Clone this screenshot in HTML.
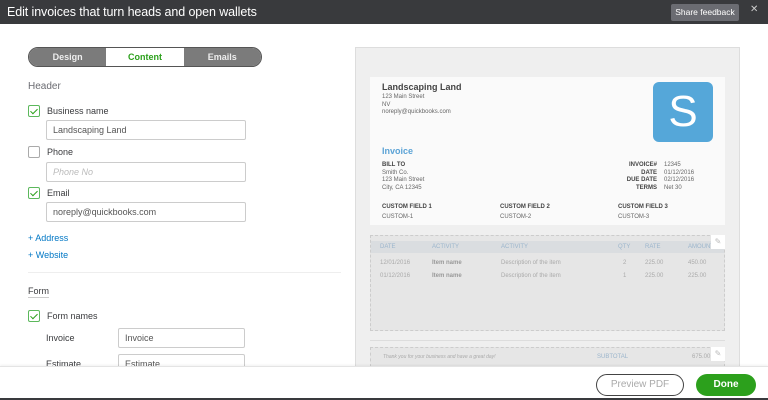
<!DOCTYPE html>
<html><head><style>
*{margin:0;padding:0;box-sizing:border-box}
body{width:768px;height:400px;overflow:hidden;background:#fff;font-family:"Liberation Sans",sans-serif;position:relative;color:#393a3d}
.a{position:absolute}
.top{left:0;top:0;width:768px;height:24px;background:#393a3d;color:#fff;font-size:12.5px;letter-spacing:-0.1px;line-height:24px;padding-left:7px}
.sf{left:671px;top:4px;width:68px;height:17px;background:#6b6c72;border-radius:2px;color:#fff;font-size:8.5px;line-height:17px;text-align:center}
.x{left:750px;top:4px;color:#ccc;font-size:10px}
.tabs{left:28px;top:47px;width:234px;height:20px;border:1px solid #555;border-radius:10px;overflow:hidden;display:flex;font-size:9px;font-weight:bold;line-height:18px;text-align:center}
.tabs div{flex:1;background:#7b7b7b;color:#eee}
.tabs .on{background:#fff;color:#2ca01c}
.lbl{font-size:9px;color:#393a3d}
.cb{width:12px;height:12px;border:1px solid #aaa;border-radius:2px;background:#fff}
.cb.c{border-color:#5cb85c}
.cb.c:after{content:"";position:absolute;left:3px;top:1px;width:3px;height:6px;border:solid #2ca01c;border-width:0 1px 1px 0;transform:rotate(45deg)}
.in{height:20px;border:1px solid #ccc;border-radius:2px;font-size:9px;line-height:18px;padding-left:6px;color:#555}
.link{color:#0077c5;font-size:9px}
.pv{left:355px;top:47px;width:385px;height:330px;background:#efefef;border:1px solid #ddd}
.s{font-size:6px;color:#666}
.b{font-weight:bold;color:#444}
</style></head><body>
<div class="a top">Edit invoices that turn heads and open wallets</div>
<div class="a sf">Share feedback</div>
<div class="a x">✕</div>

<div class="a tabs"><div>Design</div><div class="on">Content</div><div>Emails</div></div>
<div class="a" style="left:28px;top:81px;font-size:10px;color:#6b6c72">Header</div>
<div class="a cb c" style="left:28px;top:105px"></div>
<div class="a lbl" style="left:47px;top:106px">Business name</div>
<div class="a in" style="left:46px;top:120px;width:200px">Landscaping Land</div>
<div class="a cb" style="left:28px;top:146px"></div>
<div class="a lbl" style="left:47px;top:147px">Phone</div>
<div class="a in" style="left:46px;top:162px;width:200px;color:#bbb;font-style:italic">Phone No</div>
<div class="a cb c" style="left:28px;top:187px"></div>
<div class="a lbl" style="left:47px;top:188px">Email</div>
<div class="a in" style="left:46px;top:202px;width:200px">noreply@quickbooks.com</div>
<div class="a link" style="left:28px;top:233px">+ Address</div>
<div class="a link" style="left:28px;top:250px">+ Website</div>
<div class="a" style="left:28px;top:272px;width:313px;height:1px;background:#eee"></div>
<div class="a lbl" style="left:28px;top:286px;border-bottom:1px solid #ccc;padding-bottom:1px">Form</div>
<div class="a cb c" style="left:28px;top:310px"></div>
<div class="a lbl" style="left:47px;top:311px">Form names</div>
<div class="a lbl" style="left:46px;top:333px">Invoice</div>
<div class="a in" style="left:118px;top:328px;width:127px">Invoice</div>
<div class="a lbl" style="left:46px;top:359px">Estimate</div>
<div class="a in" style="left:118px;top:354px;width:127px">Estimate</div>

<div class="a pv"></div>
<div class="a" style="left:370px;top:77px;width:355px;height:148px;background:#fafafa"></div>
<div class="a b" style="left:382px;top:82px;font-size:9px">Landscaping Land</div>
<div class="a s" style="left:382px;top:94px;line-height:7.5px">123 Main Street<br>NV<br>noreply@quickbooks.com</div>
<div class="a" style="left:653px;top:82px;width:60px;height:60px;background:#55a7d9;border-radius:6px;color:#fff;font-size:44px;text-align:center;line-height:60px">S</div>
<div class="a" style="left:382px;top:146px;font-size:9px;color:#5ba3d6;font-weight:bold">Invoice</div>
<div class="a s" style="left:382px;top:162px;line-height:7.5px"><span class="b">BILL TO</span><br>Smith Co.<br>123 Main Street<br>City, CA 12345</div>
<div class="a s" style="left:600px;top:162px;line-height:7.5px;text-align:right;width:57px" ><span class="b">INVOICE#<br>DATE<br>DUE DATE<br>TERMS</span></div>
<div class="a s" style="left:664px;top:162px;line-height:7.5px">12345<br>01/12/2016<br>02/12/2016<br>Net 30</div>
<div class="a s" style="left:382px;top:202px;line-height:10px"><span class="b">CUSTOM FIELD 1</span><br>CUSTOM-1</div>
<div class="a s" style="left:500px;top:202px;line-height:10px"><span class="b">CUSTOM FIELD 2</span><br>CUSTOM-2</div>
<div class="a s" style="left:618px;top:202px;line-height:10px"><span class="b">CUSTOM FIELD 3</span><br>CUSTOM-3</div>

<div class="a" style="left:370px;top:235px;width:355px;height:96px;background:#e6e6e6;border:1px dashed #ccc"></div>
<div class="a" style="left:371px;top:241px;width:353px;height:12px;background:#dadde0"></div>
<div class="a s" style="left:380px;top:244px;color:#9bb5cc;width:340px">
<span class="a" style="left:0">DATE</span><span class="a" style="left:52px">ACTIVITY</span><span class="a" style="left:121px">ACTIVITY</span><span class="a" style="left:238px">QTY</span><span class="a" style="left:265px">RATE</span><span class="a" style="left:308px">AMOUNT</span></div>
<div class="a s" style="left:380px;top:257px;color:#aaa;width:340px;line-height:13px">
<span class="a" style="left:0">12/01/2016</span><span class="a b" style="left:52px;color:#999">Item name</span><span class="a" style="left:121px">Description of the item</span><span class="a" style="left:243px">2</span><span class="a" style="left:265px">225.00</span><span class="a" style="left:308px">450.00</span></div>
<div class="a s" style="left:380px;top:270px;color:#aaa;width:340px;line-height:13px">
<span class="a" style="left:0">01/12/2016</span><span class="a b" style="left:52px;color:#999">Item name</span><span class="a" style="left:121px">Description of the item</span><span class="a" style="left:243px">1</span><span class="a" style="left:265px">225.00</span><span class="a" style="left:308px">225.00</span></div>
<div class="a" style="left:711px;top:235px;width:14px;height:14px;background:#fff;color:#bbb;font-size:8px;text-align:center;line-height:14px">✎</div>
<div class="a" style="left:370px;top:340px;width:355px;height:1px;background:#ddd"></div>
<div class="a" style="left:370px;top:347px;width:355px;height:20px;background:#e6e6e6;border:1px dashed #ccc"></div>
<div class="a s" style="left:383px;top:354px;font-style:italic;color:#aaa;font-size:5px">Thank you for your business and have a great day!</div>
<div class="a s" style="left:597px;top:354px;color:#9bb5cc">SUBTOTAL</div>
<div class="a s" style="left:692px;top:354px;color:#aaa">675.00</div>
<div class="a" style="left:711px;top:347px;width:14px;height:14px;background:#fff;color:#bbb;font-size:8px;text-align:center;line-height:14px">✎</div>

<div class="a" style="left:0;top:366px;width:768px;height:34px;background:#fff;border-top:1px solid #e4e4e4;box-shadow:0 -1px 2px rgba(0,0,0,.06)"></div>
<div class="a" style="left:596px;top:374px;width:88px;height:22px;border:1.5px solid #444;border-radius:11px;color:#aaa;font-size:10px;text-align:center;line-height:19px">Preview PDF</div>
<div class="a" style="left:696px;top:374px;width:60px;height:22px;background:#2ca01c;border-radius:11px;color:#fff;font-size:10px;font-weight:bold;text-align:center;line-height:22px">Done</div>
<div class="a" style="left:0;top:398px;width:768px;height:2px;background:#393a3d"></div>
</body></html>
